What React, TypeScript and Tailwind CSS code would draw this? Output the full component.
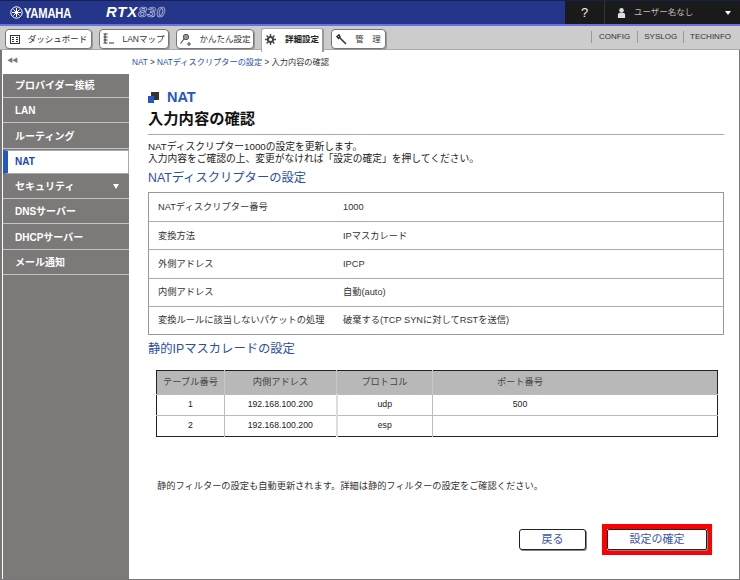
import React from "react";

const FONT = '"Liberation Sans","Noto Sans CJK JP",sans-serif';

function TabBtn({ icon, label, w, active }: { icon: React.ReactNode; label: string; w: string; active?: boolean }) {
  return (
    <div
      className={
        active
          ? `${w} h-[24px] mt-[2px] pb-[2px] bg-white rounded-t-[3px] flex items-center justify-center gap-[9px] text-[8.500px] font-bold text-[#222] border-r-2 border-r-[#999] border-l border-t border-[#aaa]`
          : `${w} h-[20px] mt-[3px] bg-white rounded-[4px] flex items-center justify-center gap-[8px] text-[8.500px] text-[#333] border border-[#777] shadow-[1px_1px_0_#999]`
      }
    >
      {icon}
      <span>{label}</span>
    </div>
  );
}

function Side({ label, active, arrow }: { label: string; active?: boolean; arrow?: boolean }) {
  if (active) {
    return (
      <div className="h-[24px] mb-[1.300px] bg-white border border-[#aaa] border-l-[5px] border-l-[#2456c8] flex items-center pl-[7px] text-[10px] font-bold text-[#2047b0]">
        {label}
      </div>
    );
  }
  return (
    <div className="h-[24px] mb-[1.300px] bg-[#7c7a78] border-b-[1.500px] border-[#c4c4c4] flex items-center justify-between pl-[12px] pr-[10px] text-[10px] font-bold text-white">
      <span>{label}</span>
      {arrow && <span className="w-0 h-0 border-x-[3.500px] border-x-transparent border-t-[5px] border-t-white" />}
    </div>
  );
}

const info: [string, string][] = [
  ["NATディスクリプター番号", "1000"],
  ["変換方法", "IPマスカレード"],
  ["外側アドレス", "IPCP"],
  ["内側アドレス", "自動(auto)"],
  ["変換ルールに該当しないパケットの処理", "破棄する(TCP SYNに対してRSTを送信)"],
];

const rows = [
  ["1", "192.168.100.200", "udp", "500"],
  ["2", "192.168.100.200", "esp", ""],
];

export default function App() {
  return (
    <div className="w-[740px] h-[580px] overflow-hidden bg-white flex flex-col" style={{ fontFamily: FONT }}>
      <header className="h-[24px] bg-[#25358a] flex items-stretch shrink-0 border-t border-[#15204f]">
        <div className="flex-1 flex items-center">
          <div className="ml-[10px] flex items-center gap-[1px] text-white font-bold w-[96px]">
            <svg width="13" height="13" viewBox="0 0 13 13" fill="none" stroke="#fff">
              <circle cx="6.500" cy="6.500" r="5.700" strokeWidth="1" />
              <path d="M6.500 2v9M2 6.500h9M3.400 3.400l6.200 6.200M9.600 3.400l-6.200 6.200" strokeWidth="1" />
            </svg>
            <span className="text-[14px] leading-none tracking-[-0.2px] scale-x-[0.8] origin-left">YAMAHA</span>
          </div>
          <span className="text-white font-bold italic text-[15px] tracking-[0.8px]">
            RTX<span className="text-[#25358a] [-webkit-text-stroke:0.6px_#d8dcec]">830</span>
          </span>
        </div>
        <div className="w-[175px] bg-[#1a1a1a] flex items-center text-[#bbb] text-[8.500px]">
          <div className="w-[40px] h-full border-r border-[#333] flex items-center justify-center text-[#eee] text-[13px]">?</div>
          <svg width="9" height="12" viewBox="0 0 10 12" className="ml-[12px]" fill="#ddd">
            <circle cx="5" cy="3" r="2.500" />
            <path d="M1 11.500V8c0-1.800 1.500-2.600 4-2.600S9 6.200 9 8v3.500z" />
          </svg>
          <span className="ml-[8px] flex-1">ユーザー名なし</span>
          <span className="mr-[9px] w-0 h-0 border-x-[3px] border-x-transparent border-t-[4px] border-t-white" />
        </div>
      </header>
      <div className="h-[2px] bg-[#6a70e0] shrink-0" />
      <nav className="h-[24px] bg-[#cccccc] border-b border-[#aaa] flex shrink-0 pl-[5px]">
        <div className="flex gap-[7px]">
          <TabBtn
            w="w-[87px]"
            label="ダッシュボード"
            icon={
              <svg width="10" height="9" viewBox="0 0 10 9" fill="none" stroke="#333">
                <rect x="0.500" y="0.500" width="9" height="8" />
                <path d="M2 2.500h2M2 4.500h2M2 6.500h2M6 2.500h2M6 4.500h2M6 6.500h2" />
              </svg>
            }
          />
          <TabBtn
            w="w-[70px]"
            label="LANマップ"
            icon={
              <svg width="11" height="12" viewBox="0 0 11 12" fill="none" stroke="#333">
                <path d="M0.500 1h4M0.500 4h4M0.500 7h4M0.500 10h4M2 1v9M6 10h5" />
              </svg>
            }
          />
          <TabBtn
            w="w-[78px]"
            label="かんたん設定"
            icon={
              <svg width="12" height="13" viewBox="0 0 12 13" fill="none" stroke="#555">
                <circle cx="7" cy="4" r="2.700" fill="#999" />
                <path d="M5 6 1.500 10.500M10 9v4M8 11h4" strokeWidth="1.200" />
              </svg>
            }
          />
          <TabBtn
            w="w-[63px]"
            label="詳細設定"
            active
            icon={
              <svg width="11" height="11" viewBox="0 0 11 11" fill="none" stroke="#444">
                <circle cx="5.500" cy="5.500" r="2.600" strokeWidth="2" />
                <path d="M5.500 0v2M5.500 9v2M0 5.500h2M9 5.500h2M1.600 1.600 3 3M8 8l1.400 1.400M9.400 1.600 8 3M3 8 1.600 9.400" strokeWidth="1.400" />
              </svg>
            }
          />
          <TabBtn
            w="w-[55px]"
            label="管　理"
            icon={
              <svg width="11" height="11" viewBox="0 0 11 11" fill="none" stroke="#333">
                <path d="M1 2.500 3 .8l1 2-1.500 1.500zM3 3l7 7" strokeWidth="1.500" />
              </svg>
            }
          />
        </div>
        <div className="ml-auto mr-[9px] mt-[6px] flex h-[10px] items-center text-[8px] text-[#333]">
          <span className="border-l border-[#999] pl-[7px] pr-[7px]">CONFIG</span>
          <span className="border-l border-[#999] pl-[6px] pr-[6px]">SYSLOG</span>
          <span className="border-l border-[#999] pl-[6px]">TECHINFO</span>
        </div>
      </nav>
      <div className="flex flex-1 min-h-0 border-l-[2px] border-r border-b border-[#777]">
        <aside className="w-[127px] shrink-0 flex flex-col">
          <div className="h-[24px] shrink-0 pl-[5px] pt-[6px] text-[6px] text-[#777] tracking-[-1px]">◀◀</div>
          <div className="flex-1 bg-[#7c7a78] ml-[1px]">
            <Side label="プロバイダー接続" />
            <Side label="LAN" />
            <Side label="ルーティング" />
            <Side label="NAT" active />
            <Side label="セキュリティ" arrow />
            <Side label="DNSサーバー" />
            <Side label="DHCPサーバー" />
            <Side label="メール通知" />
          </div>
        </aside>
        <main className="flex-1 min-w-0 flex flex-col pl-[1px]">
          <div className="h-[23px] pl-[2px] pt-[7px] text-[8.200px] text-[#333] leading-[11px]">
            <span className="text-[#2a4fb0]">NAT</span> &gt; <span className="text-[#2a4fb0]">NATディスクリプターの設定</span> &gt; 入力内容の確認
          </div>
          <div className="ml-[18px] mr-[15px] flex-1 flex flex-col">
            <div className="flex items-center mt-[16px] h-[17px]">
              <svg width="11" height="11" viewBox="0 0 11 11">
                <rect x="3" y="0" width="8" height="8" fill="#333" />
                <rect x="0" y="4" width="6" height="7" fill="#2456c8" />
              </svg>
              <span className="ml-[8px] text-[14.500px] font-bold text-[#2456c8]">NAT</span>
            </div>
            <h1 className="mt-[3px] text-[15.300px] leading-[20px] font-bold text-[#111] pb-[5px] border-b border-[#aaa]">入力内容の確認</h1>
            <p className="mt-[6px] text-[9.750px] leading-[11.500px] text-[#222]">
              NATディスクリプター1000の設定を更新します。
              <br />
              入力内容をご確認の上、変更がなければ「設定の確定」を押してください。
            </p>
            <h2 className="mt-[5px] text-[12.300px] leading-[18px] text-[#2a4fa0]">NATディスクリプターの設定</h2>
            <div className="mt-[5px] border border-[#999]">
              {info.map(([k, v], i) => (
                <div key={k} className={`h-[28.200px] pt-[2px] flex items-center text-[9.250px] text-[#333] ${i ? "border-t border-[#aaa]" : ""}`}>
                  <span className="w-[194px] pl-[9px]">{k}</span>
                  <span>{v}</span>
                </div>
              ))}
            </div>
            <h2 className="mt-[5px] text-[12.300px] leading-[18px] text-[#2a4fa0]">静的IPマスカレードの設定</h2>
            <table className="mt-[12px] ml-[8px] w-[562px] border-[1.500px] border-[#222] border-collapse text-[9.250px] text-[#222] table-fixed">
              <thead>
                <tr className="bg-[#b8b8b8] h-[24px] text-[#444]">
                  <th className="w-[68px] font-normal border-r border-[#c8c8c8]">テーブル番号</th>
                  <th className="w-[112px] font-normal border-r border-[#c8c8c8]">内側アドレス</th>
                  <th className="w-[96px] font-normal border-r border-[#c8c8c8]">プロトコル</th>
                  <th className="font-normal pr-[110px]">ポート番号</th>
                </tr>
              </thead>
              <tbody>
                {rows.map((r) => (
                  <tr key={r[0]} className="h-[21px] border-t border-[#bbb] text-center text-[8.700px]">
                    <td className="border-r border-[#bbb]">{r[0]}</td>
                    <td className="border-r-2 border-[#ddd]">{r[1]}</td>
                    <td className="border-r border-[#bbb]">{r[2]}</td>
                    <td className="pr-[110px]">{r[3]}</td>
                  </tr>
                ))}
              </tbody>
            </table>
            <p className="mt-[43px] ml-[9px] text-[9.230px] leading-[12px] text-[#333]">
              静的フィルターの設定も自動更新されます。詳細は静的フィルターの設定をご確認ください。
            </p>
            <div className="mt-[32px] flex justify-end items-center gap-[16px] mr-[12px]">
              <button className="w-[67px] h-[21px] rounded-[3px] bg-white border border-[#222] shadow-[1px_1px_0_#888] text-[11px] text-[#3a55a8]">戻る</button>
              <div className="border-[5px] border-[#ff0000]">
                <button className="block w-[100px] h-[21px] rounded-[2px] bg-white border border-[#222] shadow-[1px_1px_0_#888] text-[11px] text-[#3a55a8]">設定の確定</button>
              </div>
            </div>
          </div>
        </main>
      </div>
    </div>
  );
}
